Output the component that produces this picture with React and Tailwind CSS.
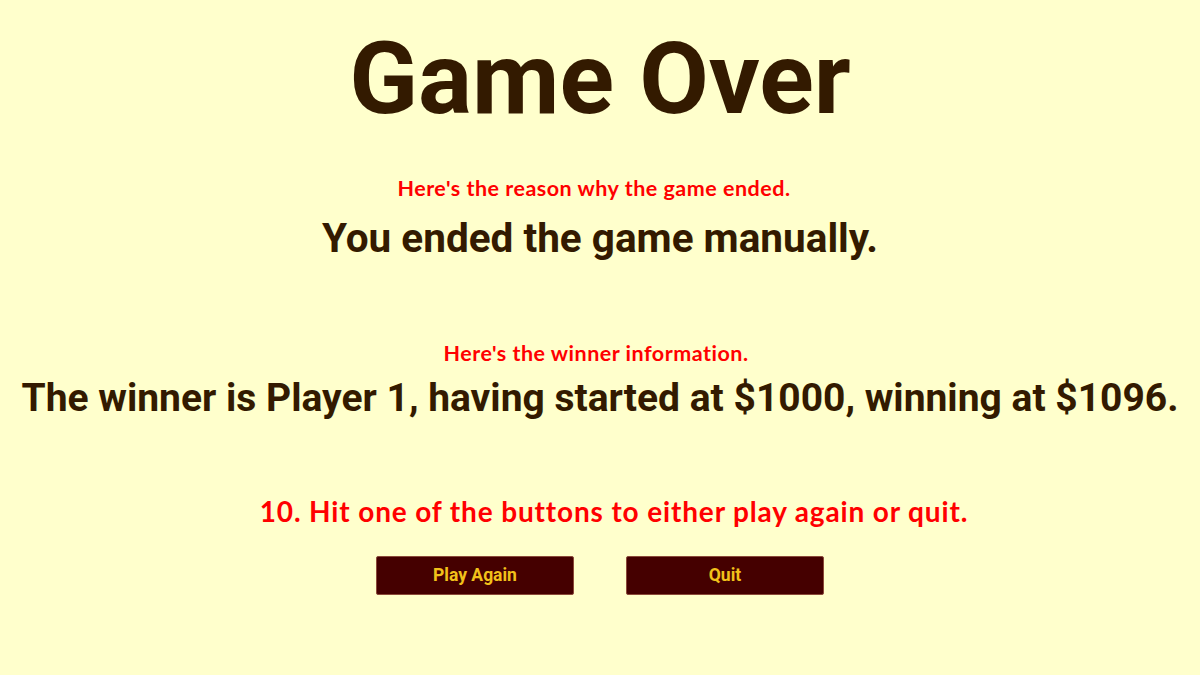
import React from "react";

export default function App() {
  return (
    <div className="w-[1200px] h-[675px] bg-[#ffffcc] flex flex-col items-center overflow-hidden font-['Roboto',sans-serif] text-[#331a00]">
      {/* Title */}
      <h1 className="mt-[28px] text-[101px] leading-[101px] font-bold">Game Over</h1>

      {/* Reason */}
      <p className="mt-[46px] pr-[12px] text-[21.5px] leading-[26px] tracking-[0.5px] font-bold text-[#ff0000] font-['Lato',sans-serif]">
        Here's the reason why the game ended.
      </p>
      <p className="mt-[13px] text-[40.5px] leading-[48px] font-bold">You ended the game manually.</p>

      {/* Winner */}
      <p className="mt-[78px] pr-[8px] text-[21.5px] leading-[26px] tracking-[0.5px] font-bold text-[#ff0000] font-['Lato',sans-serif]">
        Here's the winner information.
      </p>
      <p className="mt-[9px] text-[39px] leading-[46px] font-bold whitespace-nowrap">
        The winner is Player 1, having started at $1000, winning at $1096.
      </p>

      {/* Instruction */}
      <p className="mt-[73px] pl-[28px] text-[28px] leading-[34px] tracking-[0.85px] font-bold text-[#ff0000] font-['Lato',sans-serif]">
        10. Hit one of the buttons to either play again or quit.
      </p>

      {/* Buttons */}
      <div className="mt-[28px] flex gap-[52px]">
        <button className="w-[198px] h-[39px] bg-[#450000] border border-[#8b4a3a] rounded-[2px] text-[#f2c11a] text-[17.5px] font-bold">
          Play Again
        </button>
        <button className="w-[198px] h-[39px] bg-[#450000] border border-[#8b4a3a] rounded-[2px] text-[#f2c11a] text-[17.5px] font-bold">
          Quit
        </button>
      </div>
    </div>
  );
}
